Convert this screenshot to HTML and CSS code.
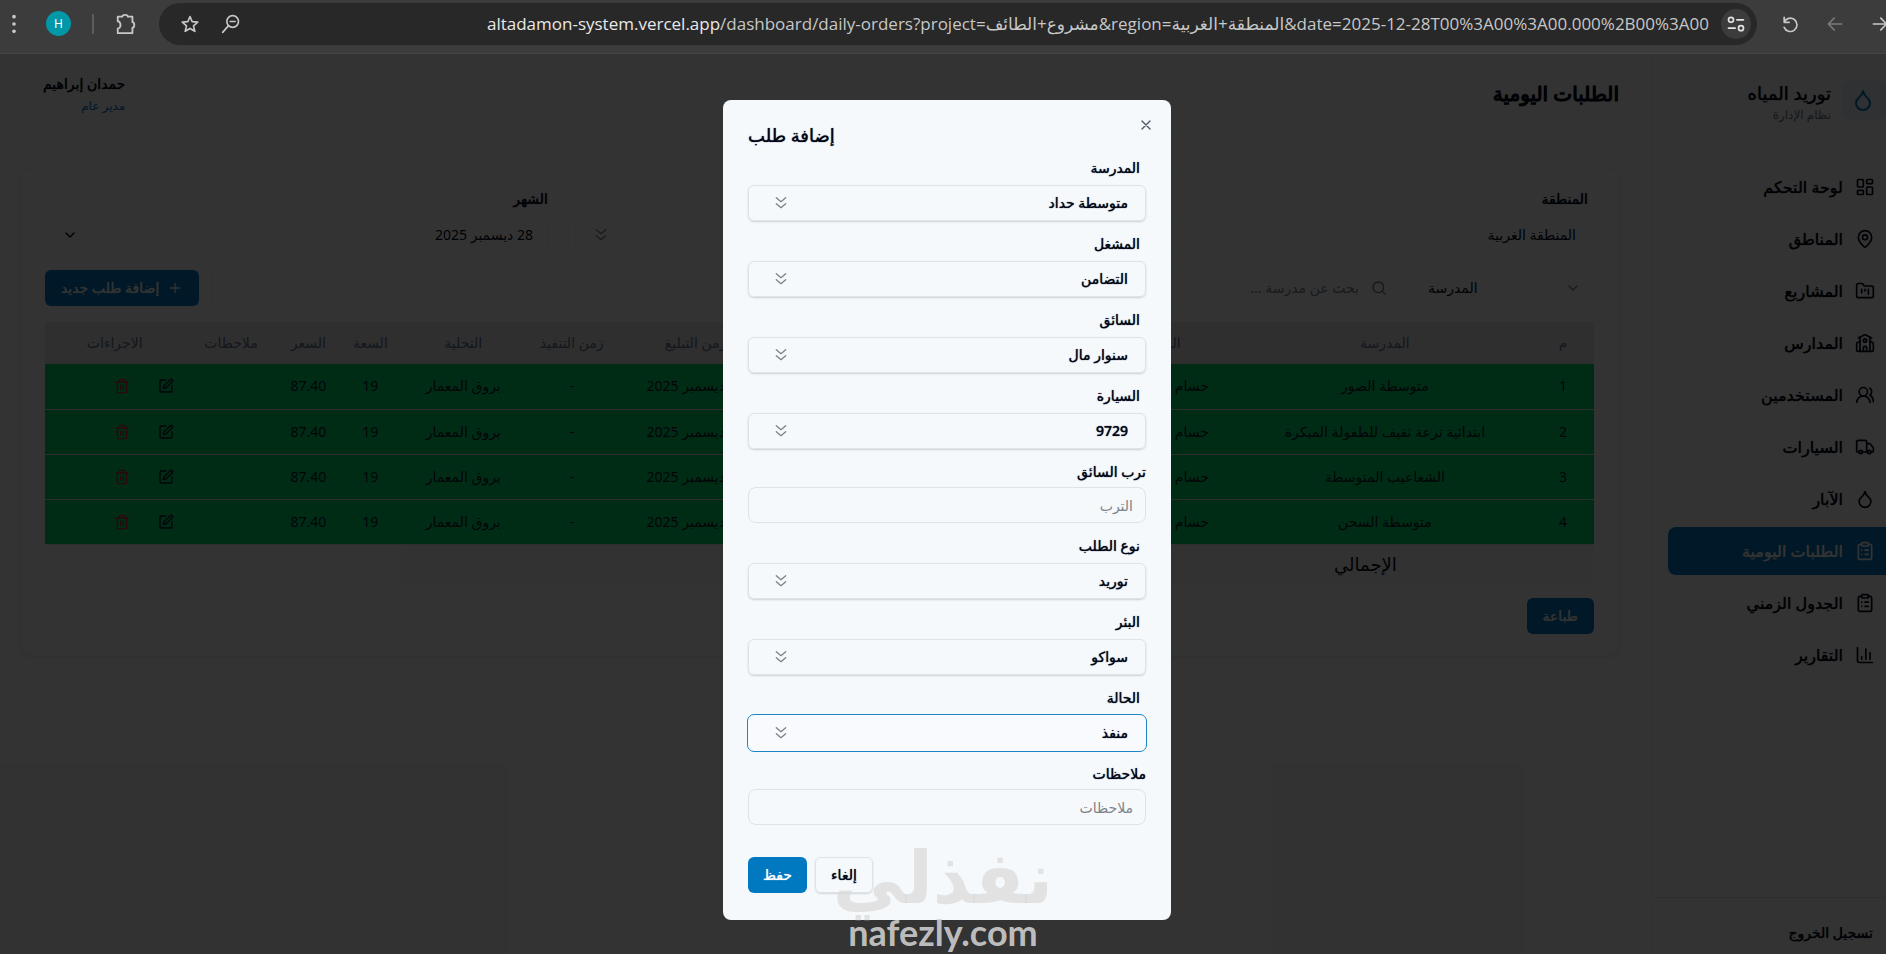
FILE: index.html
```html
<!DOCTYPE html>
<html lang="ar" dir="rtl">
<head>
    <meta charset="UTF-8">
    <meta name="viewport" content="width=device-width, initial-scale=1.0">
    <title>الطلبات اليومية - توريد المياه</title>
    <link rel="stylesheet" href="styles.css">
</head>
<body>
    <svg class="sprite" aria-hidden="true">
        <symbol id="i-droplet" viewBox="0 0 24 24"><path d="M12 22a7 7 0 0 0 7-7c0-2-1-3.900-3-5.500s-3.500-4-4-6.500c-.5 2.500-2 4.900-4 6.500C6 11.100 5 13 5 15a7 7 0 0 0 7 7z"/></symbol>
        <symbol id="i-dashboard" viewBox="0 0 24 24"><rect width="7" height="9" x="3" y="3" rx="1"/><rect width="7" height="5" x="14" y="3" rx="1"/><rect width="7" height="9" x="14" y="12" rx="1"/><rect width="7" height="5" x="3" y="16" rx="1"/></symbol>
        <symbol id="i-pin" viewBox="0 0 24 24"><path d="M20 10c0 5-5.500 10.200-7.400 11.800a1 1 0 0 1-1.200 0C9.500 20.200 4 15 4 10a8 8 0 0 1 16 0"/><circle cx="12" cy="10" r="3"/></symbol>
        <symbol id="i-folder" viewBox="0 0 24 24"><path d="M4 20h16a2 2 0 0 0 2-2V8a2 2 0 0 0-2-2h-7.900a2 2 0 0 1-1.700-.9l-.8-1.200A2 2 0 0 0 7.900 3H4a2 2 0 0 0-2 2v13c0 1.100.9 2 2 2Z"/><path d="M8 10v4M12 10v2M16 10v6"/></symbol>
        <symbol id="i-school" viewBox="0 0 24 24"><path d="M14 22v-4a2 2 0 1 0-4 0v4"/><path d="m18 10 3.400 1.700a1 1 0 0 1 .6.9V20a2 2 0 0 1-2 2H4a2 2 0 0 1-2-2v-7.400a1 1 0 0 1 .6-.9L6 10"/><path d="M18 5v17M6 5v17"/><path d="m4 6 7.100-3.600a2 2 0 0 1 1.800 0L20 6"/><circle cx="12" cy="9" r="2"/></symbol>
        <symbol id="i-users" viewBox="0 0 24 24"><path d="M18 21a8 8 0 0 0-16 0"/><circle cx="10" cy="8" r="5"/><path d="M22 20c0-3.400-2-6.500-4-8a5 5 0 0 0-.4-8.300"/></symbol>
        <symbol id="i-truck" viewBox="0 0 24 24"><path d="M14 18V6a2 2 0 0 0-2-2H4a2 2 0 0 0-2 2v11a1 1 0 0 0 1 1h2M15 18H9"/><path d="M19 18h2a1 1 0 0 0 1-1v-3.600a1 1 0 0 0-.2-.7l-3.500-4.300a1 1 0 0 0-.8-.4H14"/><circle cx="17" cy="18" r="2"/><circle cx="7" cy="18" r="2"/></symbol>
        <symbol id="i-clipboard" viewBox="0 0 24 24"><rect width="8" height="4" x="8" y="2" rx="1"/><path d="M16 4h2a2 2 0 0 1 2 2v14a2 2 0 0 1-2 2H6a2 2 0 0 1-2-2V6a2 2 0 0 1 2-2h2M12 11h4M12 16h4M8 11h.01M8 16h.01"/></symbol>
        <symbol id="i-chart" viewBox="0 0 24 24"><path d="M3 3v16a2 2 0 0 0 2 2h16M18 17V9M13 17V5M8 17v-3"/></symbol>
        <symbol id="i-down" viewBox="0 0 24 24"><path d="m6 9 6 6 6-6"/></symbol>
        <symbol id="i-downs" viewBox="0 0 24 24"><path d="m5 4 7 6 7-6M5 13l7 6 7-6"/></symbol>
        <symbol id="i-search" viewBox="0 0 24 24"><circle cx="11" cy="11" r="8"/><path d="m21 21-4.300-4.300"/></symbol>
        <symbol id="i-plus" viewBox="0 0 24 24"><path d="M5 12h14M12 5v14"/></symbol>
        <symbol id="i-x" viewBox="0 0 24 24"><path d="M18 6 6 18M6 6l12 12"/></symbol>
        <symbol id="i-edit" viewBox="0 0 24 24"><path d="M12 3H5a2 2 0 0 0-2 2v14a2 2 0 0 0 2 2h14a2 2 0 0 0 2-2v-7"/><path d="M18.400 2.600a1 1 0 0 1 3 3l-9 9a2 2 0 0 1-.9.500l-2.900.8a.5.500 0 0 1-.6-.6l.8-2.900a2 2 0 0 1 .5-.9z"/></symbol>
        <symbol id="i-trash" viewBox="0 0 24 24"><path d="M3 6h18M19 6v14a2 2 0 0 1-2 2H7a2 2 0 0 1-2-2V6M8 6V4a2 2 0 0 1 2-2h4a2 2 0 0 1 2 2v2M10 11v6M14 11v6"/></symbol>
    </svg>

    <div class="browser">
        <div class="browser-nav">
            <button class="browser-btn" aria-label="التالي"><svg class="icon" viewBox="0 0 24 24"><path d="M4 12h16M13 5l7 7-7 7"/></svg></button>
            <button class="browser-btn disabled" aria-label="السابق"><svg class="icon" viewBox="0 0 24 24"><path d="M20 12H4M11 5l-7 7 7 7"/></svg></button>
            <button class="browser-btn" aria-label="إعادة تحميل"><svg class="icon" viewBox="0 0 24 24"><path d="M5 4v6h6M5 10a8 8 0 1 1 0 6"/></svg></button>
        </div>
        <div class="address">
            <button class="tune" aria-label="معلومات الموقع"><svg class="icon" viewBox="0 0 24 24"><circle cx="6" cy="7" r="3"/><path d="M13 7h8M3 17h8"/><circle cx="18" cy="17" r="3"/></svg></button>
            <div class="url" dir="ltr"><b>altadamon-system.vercel.app</b>/dashboard/daily-orders?project=مشروع+الطائف&amp;region=المنطقة+الغربية&amp;date=2025-12-28T00%3A00%3A00.000%2B00%3A00</div>
            <button class="address-btn" aria-label="تصغير"><svg class="icon" viewBox="0 0 24 24"><circle cx="14" cy="9" r="7"/><path d="M9 14l-7 8M11 9h6"/></svg></button>
            <button class="address-btn" aria-label="إشارة مرجعية"><svg class="icon" viewBox="0 0 24 24"><path d="m12 3 2.600 6.200 6.700.6-5.100 4.400 1.600 6.600-5.800-3.500-5.800 3.500 1.600-6.600-5.100-4.400 6.700-.6z"/></svg></button>
        </div>
        <div class="browser-tools">
            <button class="tool" aria-label="الإضافات"><svg class="icon" viewBox="0 0 24 24"><path d="M3 4h5a3 2 0 0 1 6 0h5v6a2 3 0 0 1 0 6v6H3v-5a3 4 0 0 0 0-8z"/></svg></button>
            <span class="separator"></span>
            <button class="avatar" aria-label="الملف الشخصي">H</button>
            <button class="tool" aria-label="القائمة"><svg class="dots" viewBox="0 0 24 24"><circle cx="12" cy="4" r="2"/><circle cx="12" cy="12" r="2"/><circle cx="12" cy="20" r="2"/></svg></button>
        </div>
    </div>

    <div class="app">
        <aside class="sidebar">
            <div class="brand">
                <span class="brand-logo"><svg class="icon"><use href="#i-droplet"/></svg></span>
                <div>
                    <div class="brand-name">توريد المياه</div>
                    <div class="brand-sub">نظام الإدارة</div>
                </div>
            </div>
            <nav class="menu">
                <a href="#"><svg class="icon"><use href="#i-dashboard"/></svg>لوحة التحكم</a>
                <a href="#"><svg class="icon"><use href="#i-pin"/></svg>المناطق</a>
                <a href="#"><svg class="icon"><use href="#i-folder"/></svg>المشاريع</a>
                <a href="#"><svg class="icon"><use href="#i-school"/></svg>المدارس</a>
                <a href="#"><svg class="icon"><use href="#i-users"/></svg>المستخدمين</a>
                <a href="#"><svg class="icon"><use href="#i-truck"/></svg>السيارات</a>
                <a href="#"><svg class="icon"><use href="#i-droplet"/></svg>الآبار</a>
                <a href="#" class="active"><svg class="icon"><use href="#i-clipboard"/></svg>الطلبات اليومية</a>
                <a href="#"><svg class="icon"><use href="#i-clipboard"/></svg>الجدول الزمني</a>
                <a href="#"><svg class="icon"><use href="#i-chart"/></svg>التقارير</a>
            </nav>
            <div class="sidebar-footer">
                <button class="logout">تسجيل الخروج</button>
            </div>
        </aside>

        <div class="content">
            <header class="topbar">
                <h1>الطلبات اليومية</h1>
                <div class="user">
                    <div class="user-name">حمدان إبراهيم</div>
                    <div class="user-role">مدير عام</div>
                </div>
            </header>

            <main class="card">
                <div class="filters">
                    <div class="filter">
                        <label for="region">المنطقة</label>
                        <div class="select">
                            <select id="region"><option>المنطقة الغربية</option></select>
                            <svg class="icon"><use href="#i-downs"/></svg>
                        </div>
                    </div>
                    <div class="filter">
                        <label for="project">المشروع</label>
                        <div class="select">
                            <select id="project"><option>مشروع الطائف</option></select>
                            <svg class="icon"><use href="#i-downs"/></svg>
                        </div>
                    </div>
                    <div class="filter">
                        <label for="month" class="flush">الشهر</label>
                        <button id="month" class="date"><span>28 ديسمبر 2025</span><svg class="icon"><use href="#i-down"/></svg></button>
                    </div>
                </div>

                <div class="tools">
                    <div class="select by">
                        <select aria-label="البحث حسب"><option>المدرسة</option></select>
                        <svg class="icon"><use href="#i-down"/></svg>
                    </div>
                    <div class="search">
                        <svg class="icon"><use href="#i-search"/></svg>
                        <input type="text" aria-label="بحث" placeholder="بحث عن مدرسة ...">
                    </div>
                    <button class="btn primary"><svg class="icon"><use href="#i-plus"/></svg>إضافة طلب جديد</button>
                </div>

                <table class="orders">
                    <colgroup>
                        <col class="w-num"><col class="w-school"><col class="w-driver"><col class="w-car"><col class="w-date"><col class="w-done"><col class="w-treat"><col class="w-size"><col class="w-price"><col class="w-notes"><col class="w-actions">
                    </colgroup>
                    <thead>
                        <tr><th>م</th><th>المدرسة</th><th>السائق</th><th>السيارة</th><th>زمن التبليغ</th><th>زمن التنفيذ</th><th>التحلية</th><th>السعة</th><th>السعر</th><th>ملاحظات</th><th>الاجراءات</th></tr>
                    </thead>
                    <tbody>
                        <tr>
                            <td>1</td><td>متوسطة الصور</td><td>حسام سنوار مال</td><td>9729</td><td>28 ديسمبر 2025</td><td>-</td><td>بروق المعمار</td><td>19</td><td>87.40</td><td></td>
                            <td><div class="actions"><button aria-label="تعديل"><svg class="icon"><use href="#i-edit"/></svg></button><button class="delete" aria-label="حذف"><svg class="icon"><use href="#i-trash"/></svg></button></div></td>
                        </tr>
                        <tr>
                            <td>2</td><td>ابتدائية ترعة ثقيف للطفولة المبكرة</td><td>حسام سنوار مال</td><td>9729</td><td>28 ديسمبر 2025</td><td>-</td><td>بروق المعمار</td><td>19</td><td>87.40</td><td></td>
                            <td><div class="actions"><button aria-label="تعديل"><svg class="icon"><use href="#i-edit"/></svg></button><button class="delete" aria-label="حذف"><svg class="icon"><use href="#i-trash"/></svg></button></div></td>
                        </tr>
                        <tr>
                            <td>3</td><td>الشعاعيب المتوسطة</td><td>حسام سنوار مال</td><td>9729</td><td>28 ديسمبر 2025</td><td>-</td><td>بروق المعمار</td><td>19</td><td>87.40</td><td></td>
                            <td><div class="actions"><button aria-label="تعديل"><svg class="icon"><use href="#i-edit"/></svg></button><button class="delete" aria-label="حذف"><svg class="icon"><use href="#i-trash"/></svg></button></div></td>
                        </tr>
                        <tr>
                            <td>4</td><td>متوسطة السحن</td><td>حسام سنوار مال</td><td>9729</td><td>28 ديسمبر 2025</td><td>-</td><td>بروق المعمار</td><td>19</td><td>87.40</td><td></td>
                            <td><div class="actions"><button aria-label="تعديل"><svg class="icon"><use href="#i-edit"/></svg></button><button class="delete" aria-label="حذف"><svg class="icon"><use href="#i-trash"/></svg></button></div></td>
                        </tr>
                    </tbody>
                    <tfoot>
                        <tr><td class="total" colspan="3">الإجمالي</td><td class="sum" colspan="4"></td><td colspan="4"></td></tr>
                    </tfoot>
                </table>

                <button class="btn primary">طباعة</button>
            </main>
        </div>

        <div class="overlay">
            <form class="modal" role="dialog" aria-labelledby="modal-title">
                <button type="button" class="close" aria-label="إغلاق"><svg class="icon"><use href="#i-x"/></svg></button>
                <h2 id="modal-title">إضافة طلب</h2>

                <div class="field">
                    <label for="f-school">المدرسة</label>
                    <div class="select"><select id="f-school"><option>متوسطة حداد</option></select><svg class="icon"><use href="#i-downs"/></svg></div>
                </div>
                <div class="field">
                    <label for="f-operator">المشغل</label>
                    <div class="select"><select id="f-operator"><option>التضامن</option></select><svg class="icon"><use href="#i-downs"/></svg></div>
                </div>
                <div class="field">
                    <label for="f-driver">السائق</label>
                    <div class="select"><select id="f-driver"><option>سنوار مال</option></select><svg class="icon"><use href="#i-downs"/></svg></div>
                </div>
                <div class="field">
                    <label for="f-car">السيارة</label>
                    <div class="select"><select id="f-car"><option>9729</option></select><svg class="icon"><use href="#i-downs"/></svg></div>
                </div>
                <div class="field text">
                    <label for="f-trip">ترب السائق</label>
                    <input type="text" id="f-trip" placeholder="الترب">
                </div>
                <div class="field">
                    <label for="f-type">نوع الطلب</label>
                    <div class="select"><select id="f-type"><option>توريد</option></select><svg class="icon"><use href="#i-downs"/></svg></div>
                </div>
                <div class="field">
                    <label for="f-well">البئر</label>
                    <div class="select"><select id="f-well"><option>سواكو</option></select><svg class="icon"><use href="#i-downs"/></svg></div>
                </div>
                <div class="field">
                    <label for="f-status">الحالة</label>
                    <div class="select focused"><select id="f-status"><option>منفذ</option></select><svg class="icon"><use href="#i-downs"/></svg></div>
                </div>
                <div class="field text">
                    <label for="f-notes">ملاحظات</label>
                    <input type="text" id="f-notes" placeholder="ملاحظات">
                </div>

                <div class="modal-footer">
                    <button type="button" class="btn outline">إلغاء</button>
                    <button type="submit" class="btn primary">حفظ</button>
                </div>
            </form>
        </div>
    </div>

    <div class="watermark">
        <span class="watermark-ar">نفذلي</span>
        <span class="watermark-en" dir="ltr">nafezly.com</span>
    </div>
</body>
</html>
```
FILE: styles.css
```css
* {
    box-sizing: border-box;
}
body {
    margin: 0;
    min-height: 100vh;
    display: flex;
    flex-direction: column;
    overflow: hidden;
    position: relative;
    font-family: "Noto Sans", "DejaVu Sans", sans-serif;
    font-size: 14px;
    line-height: 20px;
    color: #020617;
    background: #fcfcfd;
}
h1, h2 {
    margin: 0;
}
button, input, select {
    font: inherit;
    color: inherit;
}
button {
    display: flex;
    align-items: center;
    justify-content: center;
    padding: 0;
    border: none;
    background: none;
    cursor: pointer;
}
/* the arabic face has no medium weight, a soft shadow thickens it */
h1, h2, label, .brand-name, .user-name, .logout, .menu a, .btn, .modal select {
    text-shadow: 0 0 1px currentColor;
}
.sprite {
    display: none;
}
.icon {
    flex: none;
    width: 20px;
    height: 20px;
    fill: none;
    stroke: currentColor;
    stroke-width: 2;
    stroke-linecap: round;
    stroke-linejoin: round;
}

/* browser bar */
.browser {
    display: flex;
    align-items: center;
    gap: 10px;
    height: 54px;
    padding-bottom: 6px;
    background: #3c3c3c;
    border-bottom: 1px solid #464646;
    color: #c7c7c7;
}
.browser-nav {
    display: flex;
    margin-right: -16px;
}
.browser-btn {
    width: 45px;
    height: 40px;
}
.browser-btn.disabled {
    color: #7a7a7a;
}
.address {
    flex: 1;
    min-width: 0;
    display: flex;
    align-items: center;
    height: 42px;
    padding: 0 6px 0 10px;
    border-radius: 21px;
    background: #282828;
}
.tune {
    width: 30px;
    height: 30px;
    border-radius: 50%;
    background: #3c3c3c;
    color: #e3e3e3;
}
.url {
    flex: 1;
    min-width: 0;
    margin: 0 12px;
    font-family: "Open Sans", "DejaVu Sans", sans-serif;
    font-size: 17px;
    line-height: 24px;
    text-align: right;
    white-space: nowrap;
    color: #c7c7c7;
}
.url b {
    font-weight: normal;
    color: #e8e8e8;
}
.address-btn {
    width: 41px;
}
.browser-tools {
    display: flex;
    align-items: center;
    gap: 21px;
    padding-left: 3px;
    margin-right: 12px;
}
.tool .icon, .dots {
    width: 22px;
    height: 22px;
}
.dots {
    fill: currentColor;
}
.separator {
    width: 2px;
    height: 20px;
    background: #5c5c5c;
}
.avatar {
    width: 25px;
    height: 25px;
    border-radius: 50%;
    background: #0097a7;
    color: #fff;
    font-size: 12px;
}

/* layout */
.app {
    flex: 1;
    display: flex;
    position: relative;
}
.sidebar {
    width: 234px;
    display: flex;
    flex-direction: column;
    border-left: 1px solid #f1f3f5;
    background: #fff;
}
.brand {
    display: flex;
    gap: 12px;
    padding: 26px 0 34px;
}
.brand-logo {
    display: flex;
    align-items: center;
    justify-content: center;
    width: 43px;
    height: 40px;
    padding-right: 4px;
    border-radius: 8px;
    background: #eef6fb;
    color: #0079c1;
}
.brand-logo .icon {
    width: 24px;
    height: 24px;
}
.brand-name {
    font-size: 18px;
    line-height: 26px;
}
.brand-sub {
    font-size: 12px;
    line-height: 18px;
    color: #64748b;
}
.menu {
    flex: 1;
    display: flex;
    flex-direction: column;
    gap: 4px;
    padding: 5px 0 0 15px;
}
.menu a {
    display: flex;
    align-items: center;
    gap: 12px;
    height: 48px;
    padding-right: 11px;
    font-size: 16px;
    color: #020617;
    text-decoration: none;
}
.menu a.active {
    border-radius: 8px 0 0 8px;
    background: #0079c1;
    color: #fff;
}
.sidebar-footer {
    padding: 15px 13px 1px;
    border-top: 1px solid #e5e7eb;
}
.logout {
    height: 40px;
}
.content {
    flex: 1;
    min-width: 0;
}
.topbar {
    display: flex;
    align-items: center;
    justify-content: space-between;
    height: 78px;
    padding: 2px 33px 0 43px;
    border-bottom: 1px solid #f1f3f5;
    background: #fff;
}
.topbar h1 {
    font-size: 20px;
    line-height: 28px;
    font-weight: normal;
    -webkit-text-stroke: 1px currentColor;
}
.user-name {
    line-height: 24px;
}
.user-role {
    font-size: 12px;
    color: #0079c1;
}

/* orders card */
.card {
    display: flex;
    flex-direction: column;
    align-items: flex-start;
    margin: 36px 33px 0 20px;
    padding: 20px 24px 21px;
    border: 1px solid #f1f3f5;
    border-radius: 12px;
    background: #fff;
    box-shadow: 0 1px 3px rgba(0, 0, 0, 0.08);
}
.filters {
    width: 100%;
    display: grid;
    grid-template-columns: repeat(3, 1fr);
    gap: 20px;
}
.filter label {
    display: block;
    margin-bottom: 8px;
    padding: 0 6px;
}
.filter label.flush {
    padding: 0;
}
.select {
    display: grid;
    align-items: center;
}
.select select, .select .icon {
    grid-area: 1 / 1;
}
.select select {
    width: 100%;
    height: 36px;
    padding: 0 17px;
    border: 1px solid #dfe3e8;
    border-radius: 6px;
    background: transparent;
    box-shadow: 0 1px 2px rgba(0, 0, 0, 0.16);
    font-weight: 500;
    appearance: none;
}
.select .icon {
    width: 16px;
    height: 16px;
    margin-left: 25px;
    justify-self: end;
    pointer-events: none;
    color: #7d838a;
}
.card .select select, .date, .search {
    border: 1px solid #f1f3f5;
    border-radius: 6px;
    box-shadow: none;
}
.date {
    width: 100%;
    height: 36px;
    justify-content: space-between;
    padding: 0 14px 0 16px;
}
.date .icon {
    width: 16px;
    height: 16px;
}
.tools {
    width: 100%;
    display: flex;
    gap: 12px;
    margin: 17px 0 16px;
}
.by {
    width: 180px;
    direction: ltr;
}
.by select {
    padding: 0 13px;
}
.by .icon {
    margin: 0 13px 0 0;
}
.search {
    flex: 1;
    display: flex;
    align-items: center;
    gap: 12px;
    padding: 0 14px;
    color: #64748b;
}
.search .icon {
    width: 16px;
    height: 16px;
}
.search input {
    flex: 1;
    padding: 0;
    border: none;
    background: none;
    outline: none;
}
.btn {
    gap: 8px;
    height: 36px;
    padding: 0 16px;
    border-radius: 6px;
    font-weight: 500;
}
.btn .icon {
    width: 16px;
    height: 16px;
}
.btn.primary {
    background: #0079c1;
    color: #fff;
}
.btn.outline {
    border: 1px solid #dfe3e8;
    box-shadow: 0 1px 2px rgba(0, 0, 0, 0.14);
}
.orders {
    width: 100%;
    margin-bottom: 14px;
    table-layout: fixed;
    border-collapse: collapse;
    text-align: center;
}
.w-num { width: 4%; }
.w-school { width: 19%; }
.w-driver { width: 10%; }
.w-car { width: 20%; }
.w-date { width: 10%; }
.w-done { width: 6%; }
.w-treat { width: 8%; }
.w-size { width: 4%; }
.w-price { width: 4%; }
.w-notes { width: 6%; }
.w-actions { width: 9%; }
.orders th, .orders td {
    padding: 0;
    white-space: nowrap;
}
.orders th {
    height: 42px;
    background: #ebebeb;
    font-weight: 500;
    color: #64748b;
}
.orders tbody td {
    height: 45px;
    background: #00dc6e;
    border-bottom: 1px solid #e5e7eb;
    color: #0f172a;
}
.orders tfoot td {
    height: 40px;
}
.orders tfoot .total, .orders tfoot .sum {
    background: #f7f7f7;
}
.orders tfoot .total {
    padding-left: 54px;
    font-size: 18px;
}
.actions {
    display: flex;
    gap: 8px;
}
.actions button {
    width: 36px;
    height: 36px;
}
.actions .icon {
    width: 16px;
    height: 16px;
}
.actions .delete {
    color: #dc2626;
}

/* add order dialog */
.overlay {
    position: absolute;
    inset: 0;
    display: grid;
    place-items: center;
    padding: 12px 0 0 8px;
    background: rgba(0, 0, 0, 0.8);
}
.modal {
    position: relative;
    width: 448px;
    max-width: 100%;
    padding: 24px 25px 27px;
    border-radius: 8px;
    background: #f5f9fc;
}
.modal h2 {
    margin-bottom: 10px;
    font-size: 18px;
    line-height: 22px;
    font-weight: normal;
    text-align: left;
}
.close {
    position: absolute;
    top: 17px;
    right: 17px;
    color: #4b5563;
}
.close .icon {
    width: 16px;
    height: 16px;
}
.field {
    margin-bottom: 11px;
}
.field label {
    display: block;
    margin-bottom: 5px;
    padding: 0 6px;
    line-height: 24px;
}
.field.text label {
    margin-bottom: 3px;
    padding: 0;
}
.field input {
    display: block;
    width: 100%;
    height: 36px;
    padding: 0 12px;
    border: 1px solid #dfe3e8;
    border-radius: 8px;
    background: transparent;
}
.field input::placeholder, .search input::placeholder {
    color: #7d838a;
    opacity: 1;
}
.select.focused select {
    border-color: transparent;
    background: #f8fafd;
    box-shadow: none;
    outline: 1px solid #1a86c7;
}
.modal-footer {
    display: flex;
    justify-content: flex-end;
    gap: 8px;
    margin-top: 32px;
}
.modal-footer .btn {
    padding: 0 15px;
}

.watermark {
    position: absolute;
    left: 50%;
    bottom: 0;
    width: 212px;
    display: flex;
    flex-direction: column;
    align-items: center;
    padding-bottom: 4px;
    margin-left: -106px;
    pointer-events: none;
    font-weight: 700;
}
.watermark-ar {
    font-family: "DejaVu Sans", sans-serif;
    font-size: 72px;
    line-height: 72px;
    color: rgba(216, 216, 214, 0.7);
}
.watermark-en {
    font-family: "Lato", sans-serif;
    font-size: 36px;
    line-height: 36px;
    color: rgba(208, 208, 208, 0.9);
}
```
